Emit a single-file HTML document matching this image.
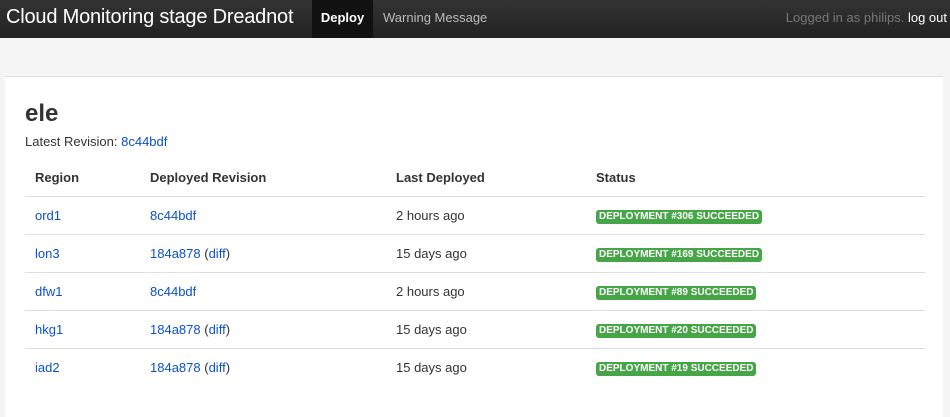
<!DOCTYPE html>
<html><head><style>
body{margin:0;width:950px;height:408px;background:#f5f5f5;font-family:"Liberation Sans",sans-serif;overflow:hidden;position:relative}
.nav{position:absolute;left:0;top:0;width:950px;height:38px;background:linear-gradient(#333,#222);}
.brand{position:absolute;left:6px;top:6px;color:#fff;font-size:20px;letter-spacing:-0.2px}
.act{position:absolute;left:312px;top:0;width:61px;height:38px;background:#111;color:#fff;font-size:13px;font-weight:bold;line-height:36px;text-align:center}
.wm{position:absolute;left:383px;top:0;color:#bbb;font-size:13px;line-height:36px}
.login{position:absolute;right:3px;top:0;color:#777;font-size:13px;line-height:36px}
.login b{color:#fff;font-weight:normal}
.panel{position:absolute;left:5px;top:76px;width:938px;height:340px;background:#fff;border-top:1px solid #ddd}
h1{position:absolute;left:25px;top:100px;margin:0;font-size:24px;font-weight:bold;color:#333}
.rev{position:absolute;left:25px;top:134px;font-size:13px;color:#333}
a{color:#0a52c8;text-decoration:none}
table{position:absolute;left:25px;top:159px;width:900px;border-collapse:collapse;font-size:13px;color:#333}
th{text-align:left;height:37px;padding:0 10px;border-bottom:1px solid #ddd}
td{height:37px;padding:0 10px;border-bottom:1px solid #ddd}
tr:last-child td{border-bottom:none}
.b{display:inline-block;background:#46a546;color:#fff;font-size:10px;font-weight:bold;padding:2px 3px;border-radius:3px;line-height:10px;letter-spacing:0}
</style></head><body>
<div class="nav"><div class="brand">Cloud Monitoring stage Dreadnot</div><div class="act">Deploy</div><div class="wm">Warning Message</div><div class="login">Logged in as philips. <b>log out</b></div></div>
<div class="panel"></div>
<h1>ele</h1>
<div class="rev">Latest Revision: <a>8c44bdf</a></div>
<table>
<tr><th style="width:95px">Region</th><th style="width:226px">Deployed Revision</th><th style="width:180px">Last Deployed</th><th>Status</th></tr>
<tr><td><a>ord1</a></td><td><a>8c44bdf</a></td><td>2 hours ago</td><td><span class="b">DEPLOYMENT #306 SUCCEEDED</span></td></tr>
<tr><td><a>lon3</a></td><td><a>184a878</a> (<a>diff</a>)</td><td>15 days ago</td><td><span class="b">DEPLOYMENT #169 SUCCEEDED</span></td></tr>
<tr><td><a>dfw1</a></td><td><a>8c44bdf</a></td><td>2 hours ago</td><td><span class="b">DEPLOYMENT #89 SUCCEEDED</span></td></tr>
<tr><td><a>hkg1</a></td><td><a>184a878</a> (<a>diff</a>)</td><td>15 days ago</td><td><span class="b">DEPLOYMENT #20 SUCCEEDED</span></td></tr>
<tr><td><a>iad2</a></td><td><a>184a878</a> (<a>diff</a>)</td><td>15 days ago</td><td><span class="b">DEPLOYMENT #19 SUCCEEDED</span></td></tr>
</table>
</body></html>
